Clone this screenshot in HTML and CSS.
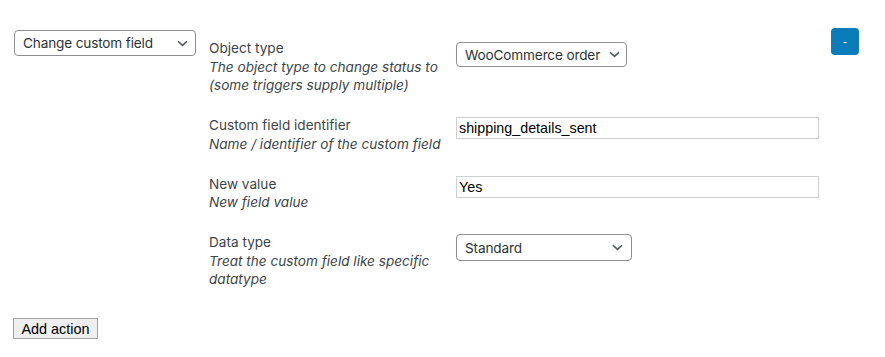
FILE: index.html
```html
<!DOCTYPE html>
<html lang="en">
<head>
  <meta charset="UTF-8" />
  <title>Actions</title>
  <link rel="stylesheet" href="styles.css">
</head>
<body>

  <div class="action-row">
    <div class="select-wrap action-type">
      <select>
        <option>Change custom field</option>
      </select>
      <svg class="chevron" width="11" height="7" viewBox="0 0 11 7"><polyline points="1,1.2 5.5,5.4 10,1.2" /></svg>
    </div>

    <div class="action-fields">
      <div class="field-label">
        <span>Object type</span>
        <em>The object type to change status to (some triggers supply multiple)</em>
      </div>
      <div class="field-control">
        <div class="select-wrap object-type">
          <select>
            <option>WooCommerce order</option>
          </select>
          <svg class="chevron" width="11" height="7" viewBox="0 0 11 7"><polyline points="1,1.2 5.5,5.4 10,1.2" /></svg>
        </div>
      </div>

      <div class="field-label">
        <span>Custom field identifier</span>
        <em>Name / identifier of the custom field</em>
      </div>
      <div class="field-control">
        <input type="text" class="text-input" value="shipping_details_sent">
      </div>

      <div class="field-label">
        <span>New value</span>
        <em>New field value</em>
      </div>
      <div class="field-control">
        <input type="text" class="text-input" value="Yes">
      </div>

      <div class="field-label">
        <span>Data type</span>
        <em>Treat the custom field like specific datatype</em>
      </div>
      <div class="field-control">
        <div class="select-wrap data-type">
          <select>
            <option>Standard</option>
          </select>
          <svg class="chevron" width="11" height="7" viewBox="0 0 11 7"><polyline points="1,1.2 5.5,5.4 10,1.2" /></svg>
        </div>
      </div>
    </div>

    <button class="remove-btn">-</button>
  </div>

  <div class="footer">
    <button class="add-btn">Add action</button>
  </div>

</body>
</html>
```

FILE: styles.css
```css
body {
  margin: 0;
  background: #fff;
  font-family: Inter, "Noto Sans", sans-serif;
  font-size: 13.6px;
  color: #3c434a;
}

.action-row {
  display: flex;
  align-items: flex-start;
  padding: 28px 26px 0 14px;
}

/* selects */
.select-wrap {
  position: relative;
  height: 26px;
}

.select-wrap select {
  appearance: none;
  -webkit-appearance: none;
  width: 100%;
  height: 100%;
  margin: 0;
  padding: 0 22px 0 8px;
  border: 1px solid #8c8f94;
  border-radius: 4px;
  background: #fff;
  font-family: Inter, "Noto Sans", sans-serif;
  font-size: 13.6px;
  letter-spacing: -0.15px;
  color: #2c3338;
}

.chevron {
  position: absolute;
  right: 8px;
  top: 10px;
  fill: none;
  stroke: #50575e;
  stroke-width: 1.5;
  pointer-events: none;
}

.action-type {
  width: 182px;
  margin-top: 2px;
  flex-shrink: 0;
}

.object-type { width: 171px; margin-top: 3px; height: 25px; }
.object-type select { padding-right: 16px; }
.object-type .chevron { right: 7px; top: 9px; }
.data-type { width: 176px; margin-top: 1px; height: 27px; }
.data-type .chevron { right: 9px; }

/* fields */
.action-fields {
  display: grid;
  grid-template-columns: 247px 363px;
  row-gap: 21.5px;
  margin: 11px 0 0 13px;
}

.field-label {
  display: flex;
  flex-direction: column;
  line-height: 18.5px;
  padding-right: 8px;
}

.field-label em {
  font-style: italic;
}

.text-input {
  box-sizing: border-box;
  width: 363px;
  height: 22px;
  margin: 0;
  padding: 0 2px;
  border: 1px solid #cfcfcf;
  border-radius: 0;
  font-family: "Liberation Sans", Arial, sans-serif;
  font-size: 14.3px;
  color: #000;
}

.field-control .text-input {
  margin-top: 1px;
}

.remove-btn {
  margin-left: auto;
  width: 28px;
  height: 27px;
  padding: 0;
  border: none;
  border-radius: 4px;
  background: #0a7cba;
  color: #fff;
  font-family: "Liberation Sans", Arial, sans-serif;
  font-size: 12px;
  cursor: pointer;
}

.footer {
  padding: 29.5px 0 0 13px;
}

.add-btn {
  height: 21px;
  padding: 0 7.5px;
  border: 1px solid #a3a3a3;
  border-radius: 0;
  background: #efefef;
  font-family: "Liberation Sans", Arial, sans-serif;
  font-size: 14.4px;
  color: #000;
}
```
